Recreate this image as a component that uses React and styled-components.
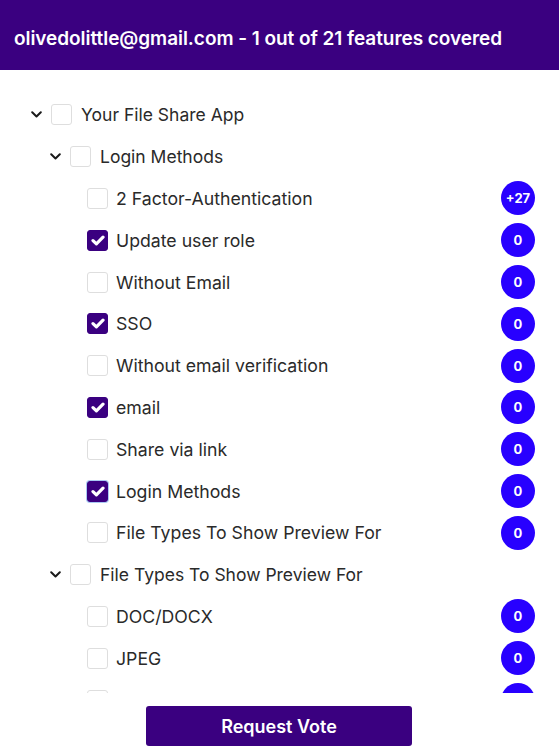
import React from "react";
import styled, { createGlobalStyle } from "styled-components";

const Global = createGlobalStyle`
  html, body { margin: 0; padding: 0; background: #fff; }
  body { font-family: Inter, "Noto Sans", sans-serif; }
  * { box-sizing: border-box; }
`;

const Page = styled.div`
  width: 559px;
  height: 753px;
  display: flex;
  flex-direction: column;
  background: #fff;
`;

const Header = styled.header`
  height: 70px;
  flex: none;
  background: #3a0080;
  color: #fff;
  font-weight: 600;
  font-size: 19px;
  display: flex;
  align-items: center;
  padding-left: 14px;
  padding-top: 6px;
  letter-spacing: -0.05px;
`;

const TreeArea = styled.div`
  height: 623px;
  flex: none;
  overflow-y: auto;
  scrollbar-width: none;
  padding-top: 24px;
  &::-webkit-scrollbar { display: none; }
`;

const Row = styled.div`
  height: 41.8px;
  display: flex;
  align-items: center;
  padding-left: ${(p) => p.$indent}px;
  padding-right: 24px;
`;

const Toggle = styled.span`
  width: 12px;
  height: 12px;
  margin-right: 9px;
  display: flex;
  align-items: center;
  justify-content: center;
  flex: none;
`;

const Box = styled.span`
  width: 21px;
  height: 21px;
  flex: none;
  border-radius: 3px;
  border: 1px solid ${(p) => (p.$checked ? "#3a0080" : "#dedede")};
  background: ${(p) => (p.$checked ? "#3a0080" : "#fff")};
  display: flex;
  align-items: center;
  justify-content: center;
  box-shadow: ${(p) => (p.$focus ? "0 0 0 1px #a9c9f3" : "none")};
`;

const Label = styled.span`
  margin-left: ${(p) => (p.$leaf ? 8 : 9)}px;
  font-size: ${(p) => (p.$leaf ? 17.7 : 17.5)}px;
  color: #2a2a2a;
  flex: 1;
  white-space: nowrap;
`;

const Badge = styled.span`
  width: 34px;
  height: 34px;
  border-radius: 50%;
  background: #2800ff;
  color: #fff;
  font-size: 13px;
  font-weight: 700;
  display: flex;
  align-items: center;
  justify-content: center;
  flex: none;
`;

const Footer = styled.div`
  flex: 1;
  display: flex;
  justify-content: center;
  padding-top: 13px;
  padding-right: 1px;
`;

const VoteButton = styled.button`
  width: 266px;
  height: 40px;
  border: none;
  border-radius: 3px;
  background: #3a0080;
  color: #fff;
  font-family: Inter, "Noto Sans", sans-serif;
  font-size: 18px;
  font-weight: 600;
  cursor: pointer;
`;

const Chevron = () => (
  <svg width="11" height="7" viewBox="0 0 11 7">
    <path d="M1.2 1.2 L5.5 5.5 L9.8 1.2" fill="none" stroke="#1a1a1a" strokeWidth="2" strokeLinecap="round" strokeLinejoin="round" />
  </svg>
);

const Check = () => (
  <svg width="14" height="11" viewBox="0 0 14 11">
    <path d="M2 5.6 L5.4 8.8 L12 2.2" fill="none" stroke="#fff" strokeWidth="3.2" strokeLinecap="round" strokeLinejoin="round" />
  </svg>
);

const rows = [
  { level: 0, label: "Your File Share App", group: true },
  { level: 1, label: "Login Methods", group: true },
  { level: 2, label: "2 Factor-Authentication", badge: "+27" },
  { level: 2, label: "Update user role", badge: "0", checked: true },
  { level: 2, label: "Without Email", badge: "0" },
  { level: 2, label: "SSO", badge: "0", checked: true },
  { level: 2, label: "Without email verification", badge: "0" },
  { level: 2, label: "email", badge: "0", checked: true },
  { level: 2, label: "Share via link", badge: "0" },
  { level: 2, label: "Login Methods", badge: "0", checked: true, focus: true },
  { level: 2, label: "File Types To Show Preview For", badge: "0" },
  { level: 1, label: "File Types To Show Preview For", group: true },
  { level: 2, label: "DOC/DOCX", badge: "0" },
  { level: 2, label: "JPEG", badge: "0" },
  { level: 2, label: "PDF", badge: "0" },
  { level: 2, label: "PNG", badge: "0" },
];

const indentFor = (r) => (r.group ? 30 + r.level * 19 : 87);

export default function App() {
  return (
    <Page>
      <Global />
      <Header>olivedolittle@gmail.com - 1 out of 21 features covered</Header>
      <TreeArea>
        {rows.map((r, i) => (
          <Row key={i} $indent={indentFor(r)}>
            {r.group && (
              <Toggle>
                <Chevron />
              </Toggle>
            )}
            <Box $checked={r.checked} $focus={r.focus}>
              {r.checked && <Check />}
            </Box>
            <Label $leaf={!r.group}>{r.label}</Label>
            {r.badge && <Badge>{r.badge}</Badge>}
          </Row>
        ))}
      </TreeArea>
      <Footer>
        <VoteButton>Request Vote</VoteButton>
      </Footer>
    </Page>
  );
}
